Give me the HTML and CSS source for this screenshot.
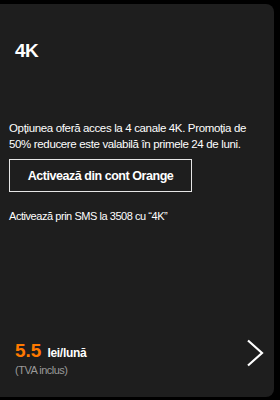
FILE: index.html
```html
<!DOCTYPE html>
<html lang="ro">
<head>
<meta charset="utf-8">
<link rel="stylesheet" href="styles.css">
</head>
<body>
<div class="card">
  <h2 class="title">4K</h2>
  <div class="body">
    <p class="desc">Opțiunea oferă acces la 4 canale 4K. Promoția de 50% reducere este valabilă în primele 24 de luni.</p>
    <button class="btn">Activează din cont Orange</button>
    <p class="sms">Activează prin SMS la 3508 cu “4K”</p>
  </div>
  <div class="footer">
    <div class="price">
      <div class="price-line"><span class="amount">5.5</span><span class="unit">lei/lună</span></div>
      <div class="vat">(TVA inclus)</div>
    </div>
    <svg class="chev" width="19" height="28" viewBox="0 0 19 28"><path d="M3 1.5 L17 14 L3 26.5" fill="none" stroke="#fff" stroke-width="2.2"/></svg>
  </div>
</div>
</body>
</html>
```
FILE: styles.css
```css
html, body {
  margin: 0;
  padding: 0;
  background: #000;
  font-family: "Liberation Sans", Arial, sans-serif;
  color: #fff;
}
.card {
  margin: 4px 6px 0 0;
  height: 393px;
  box-sizing: border-box;
  background: #1e1e1e;
  border-radius: 0 8px 8px 0;
  display: flex;
  flex-direction: column;
}
.title {
  margin: 0;
  padding: 36px 0 0 15px;
  font-size: 19px;
  font-weight: bold;
  line-height: 22px;
  letter-spacing: -0.5px;
}
.body {
  padding: 0 9px;
  margin-top: 58px;
}
.desc {
  margin: 0;
  font-size: 11.5px;
  line-height: 16px;
  letter-spacing: -0.35px;
}
.btn {
  display: block;
  margin-top: 7px;
  width: 183px;
  height: 33px;
  background: transparent;
  border: 1.5px solid #e6e6e6;
  color: #fff;
  font-family: inherit;
  font-weight: bold;
  font-size: 12.5px;
  letter-spacing: -0.45px;
  padding: 0;
}
.sms {
  margin: 17px 0 0;
  font-size: 11px;
  line-height: 14px;
  letter-spacing: -0.45px;
}
.footer {
  margin-top: auto;
  padding: 0 10px 20px 15px;
  display: flex;
  align-items: center;
  justify-content: space-between;
}
.price-line {
  line-height: 22px;
}
.amount {
  color: #ff7900;
  font-weight: bold;
  font-size: 19px;
  margin-right: 6px;
}
.unit {
  font-weight: bold;
  font-size: 12px;
  letter-spacing: -0.3px;
}
.vat {
  color: #9a9a9a;
  font-size: 11px;
  line-height: 13px;
  letter-spacing: -0.5px;
}
.chev {
  display: block;
  margin-bottom: 10px;
}
```
